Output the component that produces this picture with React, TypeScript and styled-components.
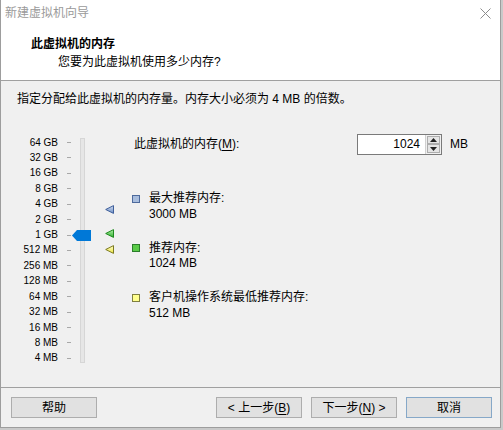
import React from 'react';
import styled, { createGlobalStyle } from 'styled-components';

const FONT = `"Liberation Sans", "Noto Sans CJK SC", sans-serif`;
const ROW = 15.43;

const scaleLabels = [
    '64 GB', '32 GB', '16 GB', '8 GB', '4 GB', '2 GB', '1 GB',
    '512 MB', '256 MB', '128 MB', '64 MB', '32 MB', '16 MB', '8 MB', '4 MB',
];

// centre of a value on the log scale, measured from the top of the scale
const valueToY = (mb: number) => (6 - Math.log2(mb / 1024)) * ROW + ROW / 2;

const markers = [
    { mb: 3000, stroke: '#3f5f9a', from: '#d2ddef', to: '#6a8cc4' },
    { mb: 1024, stroke: '#1f8a1f', from: '#b4f2aa', to: '#2fae2f' },
    { mb: 512, stroke: '#7c7a22', from: '#ffffd0', to: '#eee63c' },
];

const legend = [
    { title: '最大推荐内存:', value: '3000 MB', fill: '#a8bddd', border: '#4d6a9c' },
    { title: '推荐内存:', value: '1024 MB', fill: '#5acb48', border: '#2b7d2b' },
    { title: '客户机操作系统最低推荐内存:', value: '512 MB', fill: '#ffff8e', border: '#7f7f40' },
];

const Marker = ({ stroke, from, to, id }: { stroke: string; from: string; to: string; id: string }) => (
    <svg width="9" height="9" viewBox="0 0 9 9">
        <defs>
            <linearGradient id={id} x1="0" y1="0" x2="0" y2="1">
                <stop offset="0" stopColor={from} />
                <stop offset="1" stopColor={to} />
            </linearGradient>
        </defs>
        <polygon points="0.7,4.5 8.5,0.6 8.5,8.4" fill={`url(#${id})`} stroke={stroke} strokeWidth="1" strokeLinejoin="round" />
    </svg>
);

const App = () => {
    const thumbTop = valueToY(1024) - 5.5 - 4.7;

    return (
        <>
            <GlobalStyle />
            <Dialog>
                <TitleBar>
                    <TitleText>新建虚拟机向导</TitleText>
                    <CloseButton>
                        <svg width="11" height="11" viewBox="0 0 11 11">
                            <path d="M0.5 0.5 L10.5 10.5 M10.5 0.5 L0.5 10.5" stroke="#8c8c8c" strokeWidth="1" />
                        </svg>
                    </CloseButton>
                </TitleBar>

                <Header>
                    <HeaderTitle>此虚拟机的内存</HeaderTitle>
                    <HeaderSub>您要为此虚拟机使用多少内存?</HeaderSub>
                </Header>

                <Body>
                    <Description>指定分配给此虚拟机的内存量。内存大小必须为 4 MB 的倍数。</Description>

                    <Content>
                        <ScaleColumn>
                            {scaleLabels.map((label) => (
                                <ScaleRow key={label}>
                                    <ScaleLabel>{label}</ScaleLabel>
                                    <Tick />
                                </ScaleRow>
                            ))}
                        </ScaleColumn>

                        <Track>
                            <Thumb style={{ top: thumbTop }}>
                                <svg width="19" height="11" viewBox="0 0 19 11">
                                    <polygon points="0,5.5 5,0 19,0 19,11 5,11" fill="#0078d7" />
                                </svg>
                            </Thumb>
                        </Track>

                        <MarkerColumn>
                            {markers.map((m, i) => (
                                <MarkerSlot key={m.mb} style={{ top: valueToY(m.mb) - 6 }}>
                                    <Marker id={`mk${i}`} stroke={m.stroke} from={m.from} to={m.to} />
                                </MarkerSlot>
                            ))}
                        </MarkerColumn>

                        <RightPanel>
                            <MemoryRow>
                                <MemoryLabel>此虚拟机的内存(<u>M</u>):</MemoryLabel>
                                <InputGroup>
                                    <NumberBox>1024</NumberBox>
                                    <Spinner>
                                        <SpinButton>
                                            <svg width="7" height="4" viewBox="0 0 7 4"><polygon points="3.5,0 7,4 0,4" fill="#222" /></svg>
                                        </SpinButton>
                                        <SpinButton>
                                            <svg width="7" height="4" viewBox="0 0 7 4"><polygon points="0,0 7,0 3.5,4" fill="#222" /></svg>
                                        </SpinButton>
                                    </Spinner>
                                </InputGroup>
                                <Unit>MB</Unit>
                            </MemoryRow>

                            <LegendList>
                                {legend.map((item) => (
                                    <LegendItem key={item.title}>
                                        <Swatch $fill={item.fill} $border={item.border} />
                                        <LegendText>
                                            <div>{item.title}</div>
                                            <div>{item.value}</div>
                                        </LegendText>
                                    </LegendItem>
                                ))}
                            </LegendList>
                        </RightPanel>
                    </Content>
                </Body>

                <Footer>
                    <Button>帮助</Button>
                    <Spacer />
                    <Button>&lt; 上一步(<u>B</u>)</Button>
                    <Button>下一步(<u>N</u>) &gt;</Button>
                    <Button $focused>取消</Button>
                </Footer>
            </Dialog>
        </>
    );
};

const GlobalStyle = createGlobalStyle`
    html, body {
        margin: 0;
        padding: 0;
        background: #c9c9c9;
    }
    body {
        width: 503px;
        height: 430px;
        overflow: hidden;
        font-family: ${FONT};
        font-size: 12px;
        color: #000;
    }
    u {
        text-decoration-thickness: 1px;
        text-underline-offset: 2px;
    }
`;

const Dialog = styled.div`
    display: flex;
    flex-direction: column;
    box-sizing: border-box;
    width: 501px;
    height: 428px;
    background: #f0f0f0;
    border: 1px solid #9d9d9d;
    border-top: none;
`;

const TitleBar = styled.div`
    display: flex;
    align-items: center;
    height: 28px;
    padding: 0 9px 2px 4px;
    box-sizing: border-box;
    background: #fff;
`;

const TitleText = styled.div`
    flex: 1;
    color: #9a9a9a;
    line-height: 16px;
`;

const CloseButton = styled.div`
    display: flex;
    align-items: center;
    justify-content: center;
    width: 12px;
    height: 12px;
`;

const Header = styled.div`
    height: 53px;
    padding: 7.5px 0 0 30px;
    box-sizing: border-box;
    background: #fff;
    border-bottom: 1px solid #a0a0a0;
`;

const HeaderTitle = styled.div`
    font-weight: bold;
    line-height: 16px;
`;

const HeaderSub = styled.div`
    margin: 2px 0 0 27px;
    line-height: 16px;
`;

const Body = styled.div`
    flex: 1;
    padding: 0 16px;
`;

const Description = styled.div`
    margin-top: 11px;
    line-height: 14px;
`;

const Content = styled.div`
    display: flex;
    align-items: flex-start;
    margin-top: 28.8px;
`;

const ScaleColumn = styled.div`
    display: flex;
    flex-direction: column;
    width: 54px;
`;

const ScaleRow = styled.div`
    display: flex;
    align-items: center;
    justify-content: flex-end;
    height: ${ROW}px;
`;

const ScaleLabel = styled.span`
    font-size: 10px;
    line-height: 12px;
    color: #000;
    white-space: nowrap;
`;

const Tick = styled.span`
    width: 4px;
    height: 1px;
    margin-left: 9px;
    background: #a8a8a8;
`;

const Track = styled.div`
    position: relative;
    width: 3px;
    height: 223px;
    margin: 3.7px 0 0 9px;
    background: #e6e6e6;
    border: 1px solid #d6d6d6;
`;

const Thumb = styled.div`
    position: absolute;
    left: -9px;
    width: 19px;
    height: 11px;
    line-height: 0;
`;

const MarkerColumn = styled.div`
    position: relative;
    width: 9px;
    height: 231px;
    margin-left: 20px;
`;

const MarkerSlot = styled.div`
    position: absolute;
    left: 0;
    line-height: 0;
`;

const RightPanel = styled.div`
    display: flex;
    flex-direction: column;
    margin-left: 18px;
    margin-top: -1px;
`;

const MemoryRow = styled.div`
    display: flex;
    align-items: center;
    height: 21px;
`;

const MemoryLabel = styled.div`
    width: 225px;
    padding-left: 2px;
    box-sizing: border-box;
    line-height: 16px;
`;

const InputGroup = styled.div`
    display: flex;
    height: 21px;
    box-sizing: border-box;
    border: 1px solid #7a7a7a;
    background: #fff;
`;

const NumberBox = styled.div`
    width: 67px;
    padding-right: 5px;
    box-sizing: border-box;
    text-align: right;
    line-height: 19px;
`;

const Spinner = styled.div`
    display: flex;
    flex-direction: column;
    justify-content: space-between;
    width: 16px;
    padding: 1px;
    box-sizing: border-box;
    border-left: 1px solid #d0d0d0;
    background: #f0f0f0;
`;

const SpinButton = styled.div`
    display: flex;
    align-items: center;
    justify-content: center;
    height: 9px;
    background: #e5e5e5;
    border: 1px solid #adadad;
    box-sizing: border-box;
`;

const Unit = styled.div`
    margin-left: 8px;
    line-height: 16px;
`;

const LegendList = styled.div`
    display: flex;
    flex-direction: column;
    gap: 18.5px;
    margin-top: 36.5px;
`;

const LegendItem = styled.div`
    display: flex;
    align-items: flex-start;
`;

const Swatch = styled.span<{ $fill: string; $border: string }>`
    width: 8px;
    height: 8px;
    margin-top: 3.5px;
    box-sizing: border-box;
    background: ${(p) => p.$fill};
    border: 1px solid ${(p) => p.$border};
`;

const LegendText = styled.div`
    margin-left: 9px;
    line-height: 15.5px;
`;

const Footer = styled.div`
    display: flex;
    gap: 9px;
    height: 40px;
    padding: 9px 8px 0 10px;
    box-sizing: border-box;
    border-top: 1px solid #a0a0a0;
`;

const Spacer = styled.div`
    flex: 1;
`;

const Button = styled.div<{ $focused?: boolean }>`
    display: flex;
    align-items: center;
    justify-content: center;
    width: 86px;
    height: 21px;
    box-sizing: border-box;
    background: #e1e1e1;
    border: 1px solid ${(p) => (p.$focused ? '#86a8c8' : '#adadad')};
    line-height: 16px;
`;

export default App;
